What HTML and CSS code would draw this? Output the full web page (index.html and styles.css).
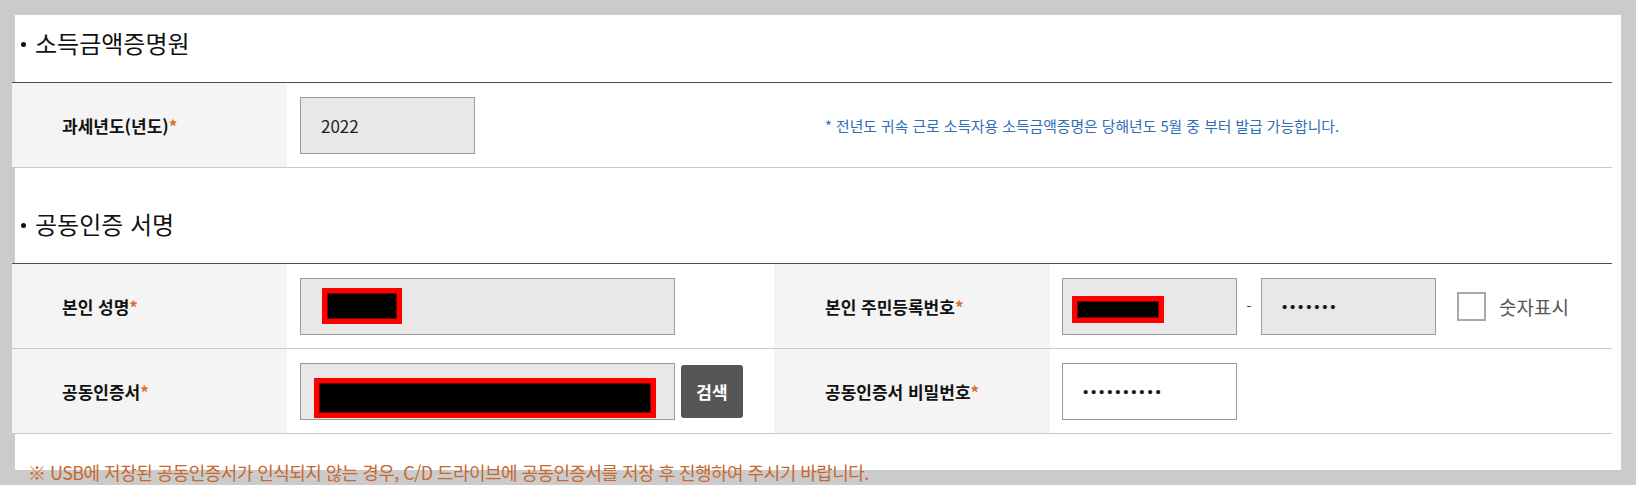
FILE: index.html
```html
<!DOCTYPE html>
<html lang="ko">
<head>
    <meta charset="UTF-8">
    <meta name="viewport" content="width=device-width, initial-scale=1.0">
    <title>소득금액증명원</title>
    <link rel="stylesheet" href="styles.css">
</head>
<body>

<div class="panel">
    <div class="form">
        <h2 class="sec-title first">소득금액증명원</h2>

        <div class="row">
            <div class="th">과세년도(년도)<em>*</em></div>
            <div class="td">
                <div class="field gray short">2022</div>
            </div>
            <div class="td note">* 전년도 귀속 근로 소득자용 소득금액증명은 당해년도 5월 중 부터 발급 가능합니다.</div>
        </div>

        <h2 class="sec-title second">공동인증 서명</h2>

        <div class="row">
            <div class="th">본인 성명<em>*</em></div>
            <div class="td">
                <div class="field gray long">
                    <span class="mask name"></span>
                </div>
            </div>
            <div class="th">본인 주민등록번호<em>*</em></div>
            <div class="td">
                <div class="field gray short">
                    <span class="mask jumin"></span>
                </div>
                <span class="dash">-</span>
                <div class="field gray short"><span class="dots">•••••••</span></div>
                <label class="check"><span class="box"></span>숫자표시</label>
            </div>
        </div>

        <div class="row">
            <div class="th">공동인증서<em>*</em></div>
            <div class="td">
                <div class="field gray long">
                    <span class="mask cert"></span>
                </div>
                <button class="btn-search">검색</button>
            </div>
            <div class="th">공동인증서 비밀번호<em>*</em></div>
            <div class="td">
                <div class="field short"><span class="dots">••••••••••</span></div>
            </div>
        </div>

        <p class="warn">※ USB에 저장된 공동인증서가 인식되지 않는 경우, C/D 드라이브에 공동인증서를 저장 후 진행하여 주시기 바랍니다.</p>
    </div>
</div>

</body>
</html>
```

FILE: styles.css
```css
body {
    margin: 0;
    padding: 15px;
    background-color: #cbcbcb;
    font-family: "Noto Sans CJK KR", "Liberation Sans", sans-serif;
    color: #111;
}
.panel {
    background-color: #fff;
    height: 455px;
}
.form {
    margin-left: -3px;
    width: 1600px;
}
.sec-title {
    margin: 0;
    padding-left: 9px;
    font-size: 24px;
    font-weight: normal;
    line-height: 32px;
    border-bottom: 1px solid #4d4d4d;
}
.sec-title::before {
    content: "";
    display: inline-block;
    width: 5px;
    height: 5px;
    border-radius: 50%;
    background-color: #111;
    margin-right: 9px;
    vertical-align: middle;
    position: relative;
    top: -2px;
}
.sec-title.first {
    padding-top: 12px;
    height: 55px;
}
.sec-title.second {
    padding-top: 40px;
    height: 55px;
}
.row {
    display: grid;
    grid-template-columns: 275px 487px 276px 1fr;
    height: 84px;
    border-bottom: 1px solid #c8c8c8;
}
.th {
    background-color: #f4f4f4;
    padding-left: 50px;
    display: flex;
    align-items: center;
    font-size: 17px;
    font-weight: bold;
}
.th em {
    font-style: normal;
    color: #e26b2e;
}
.td {
    display: flex;
    align-items: center;
    padding-left: 13px;
}
.row .th + .td + .th {
    padding-left: 51px;
}
.row .th + .td + .th + .td {
    padding-left: 12px;
}
.td.note {
    grid-column: 3 / 5;
    padding-left: 51px;
    font-size: 14.8px;
    color: #2f6db5;
}
.field {
    box-sizing: border-box;
    height: 57px;
    border: 1px solid #9a9a9a;
    background-color: #fff;
    display: flex;
    align-items: center;
    padding-left: 20px;
    font-size: 17px;
    color: #222;
}
.field.gray {
    background-color: #e8e8e8;
}
.field.short {
    width: 175px;
}
.field.long {
    width: 375px;
}
.mask {
    box-sizing: border-box;
    display: block;
    background-color: #000;
    border: 5px solid #f00;
    box-shadow: inset 0 0 0 1px #7a0000;
}
.mask.name {
    width: 80px;
    height: 36px;
    margin-left: 1px;
}
.mask.jumin {
    width: 92px;
    height: 27px;
    margin-left: -11px;
    margin-top: 7px;
}
.mask.cert {
    width: 342px;
    height: 40px;
    margin-left: -7px;
    margin-top: 14px;
}
.dots {
    font-family: "Liberation Sans", sans-serif;
    font-size: 15px;
    letter-spacing: 2.8px;
    color: #111;
}
.dash {
    width: 24px;
    text-align: center;
    font-size: 14px;
    color: #333;
}
.check {
    display: flex;
    align-items: center;
    margin-left: 21px;
    font-size: 19px;
    color: #555;
}
.check .box {
    box-sizing: border-box;
    width: 29px;
    height: 29px;
    border: 2px solid #a8a8a8;
    background-color: #fff;
    margin-right: 13px;
}
.btn-search {
    margin-left: 6px;
    width: 62px;
    height: 53px;
    border: 0;
    border-radius: 3px;
    background-color: #555;
    color: #fff;
    font-family: inherit;
    font-size: 17px;
    font-weight: bold;
    padding: 0;
}
.warn {
    margin: 27px 0 0 16px;
    font-size: 18px;
    line-height: 22px;
    letter-spacing: -0.55px;
    color: #c8682f;
    white-space: nowrap;
}
```
